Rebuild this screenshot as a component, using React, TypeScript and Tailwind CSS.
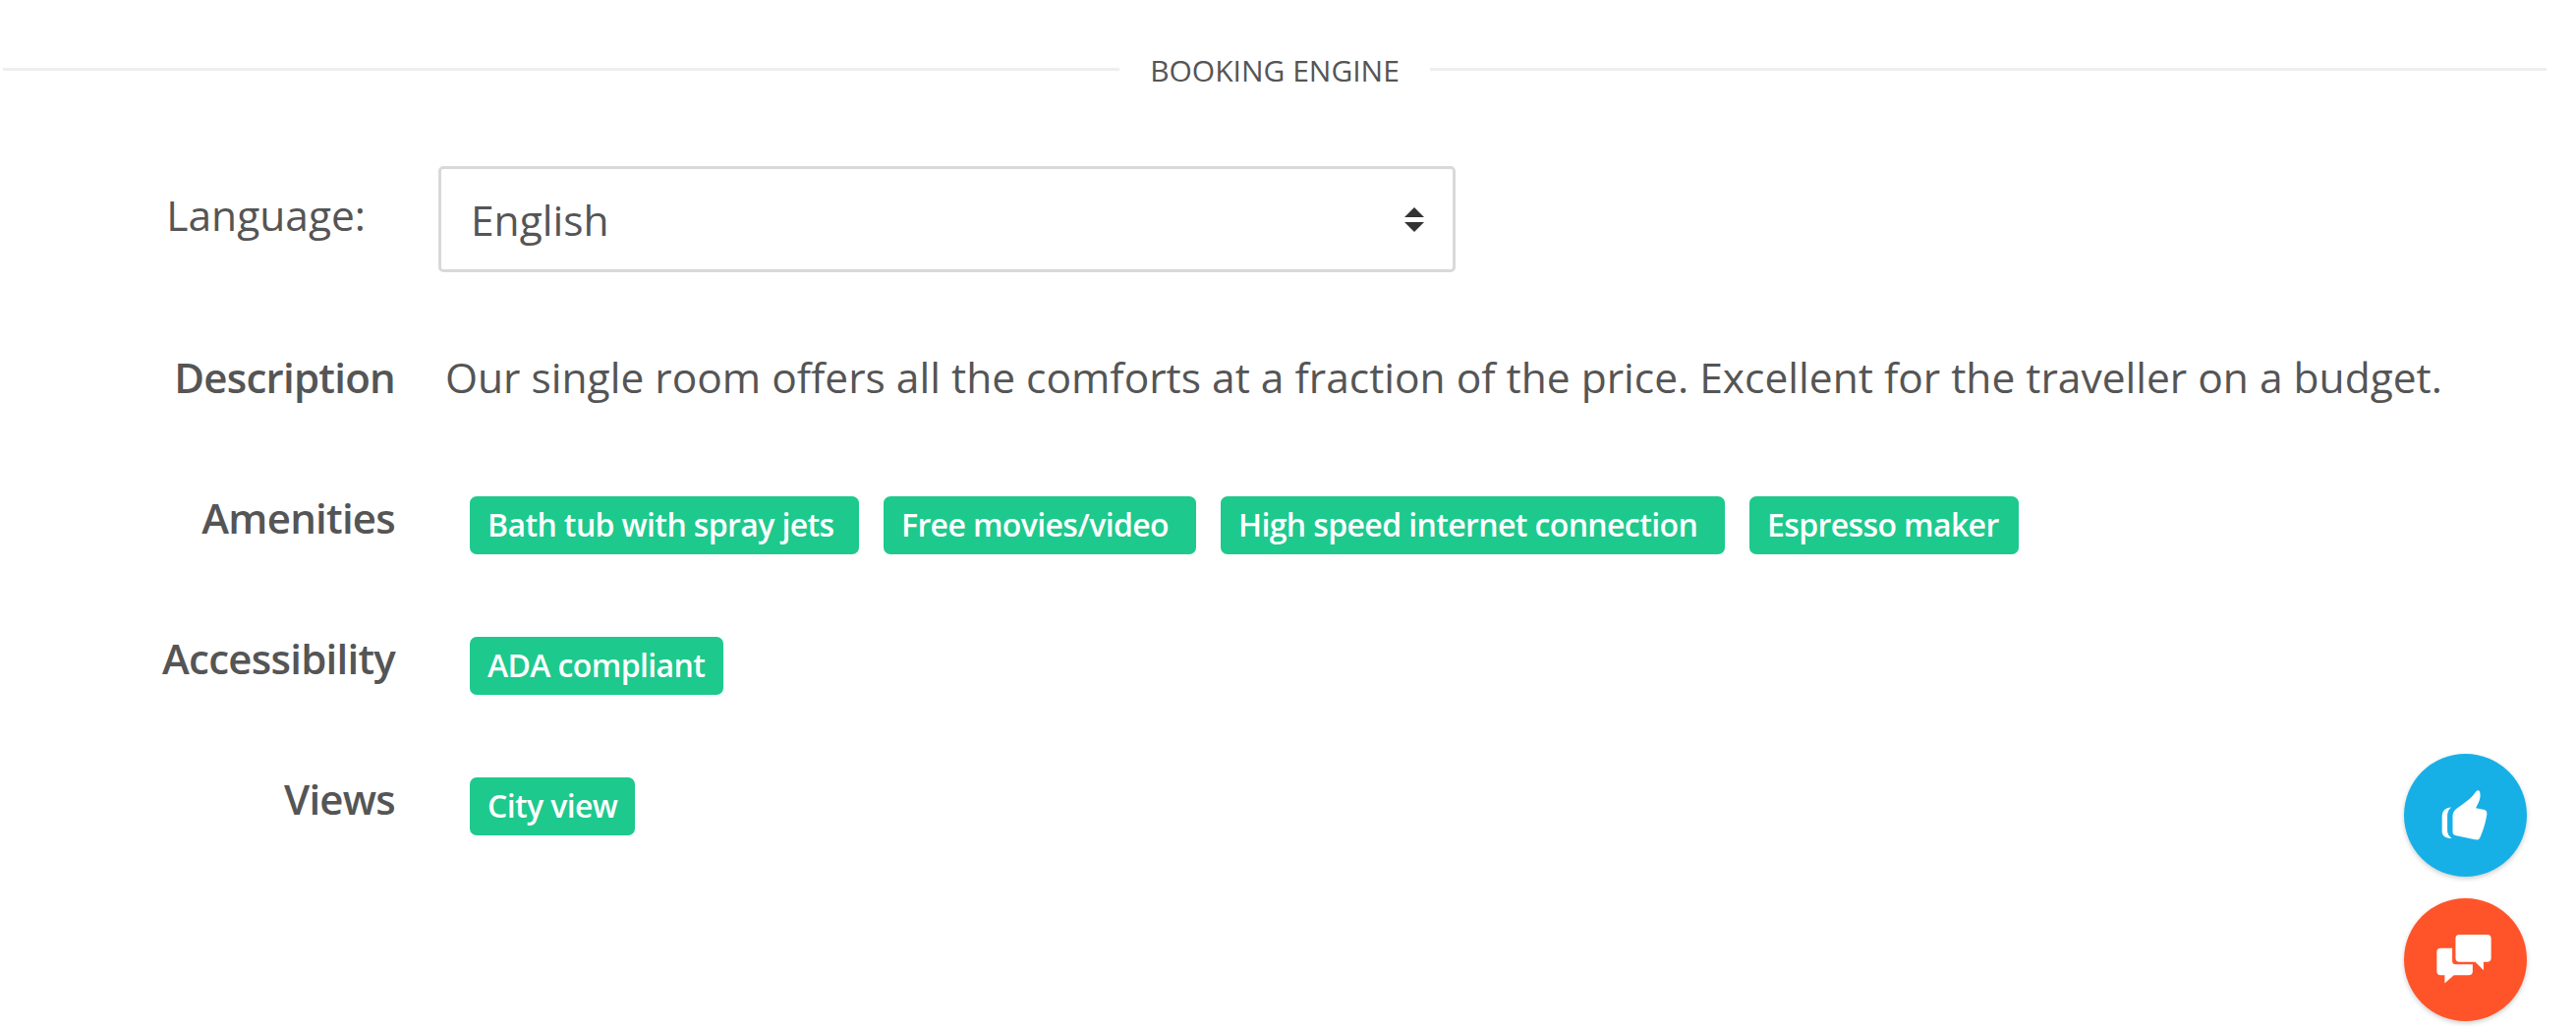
const font = { fontFamily: '"Open Sans", "Noto Sans", sans-serif' };

type Tag = { text: string; width: string };

function Row({ label, tags }: { label: string; tags: Tag[] }) {
  return (
    <div className="flex items-start h-[59px] mb-[84px]">
      <div className="w-[402px] shrink-0 -mt-[3px] text-right text-[42px] leading-[50px] font-semibold tracking-[-0.75px] text-[#555555]">{label}</div>
      <div className="ml-[76px] flex gap-[25px]">
        {tags.map((t) => (
          <span key={t.text} className={`${t.width} h-[59px] pl-[18px] rounded-[7px] bg-[#1dc98d] text-white text-[32px] font-semibold tracking-[-0.62px] leading-[57px] whitespace-nowrap`}>{t.text}</span>
        ))}
      </div>
    </div>
  );
}

export default function App() {
  return (
    <div className="relative h-[1046px] w-full overflow-hidden bg-white" style={font}>
      <div className="flex items-center pl-[3px] pr-[30px] pt-[57px] h-[84px]">
        <div className="flex-1 h-[3px] bg-[#eeeeee]" />
        <div className="px-[31px] pt-[2px] text-[30px] leading-[30px] text-[#555555] uppercase whitespace-nowrap">Booking Engine</div>
        <div className="flex-1 h-[3px] bg-[#eeeeee]" />
      </div>

      <div className="flex items-center pt-[85px]">
        <div className="w-[372px] shrink-0 -mt-[9px] text-right text-[42.5px] leading-[50px] text-[#555555]">Language:</div>
        <div className="ml-[74px] w-[1035px] h-[108px] border-[3px] border-[#d9d9d9] rounded-[5px] flex items-center justify-between pl-[30px] pr-[29px]">
          <span className="pt-[2px] text-[42.5px] leading-[50px] text-[#555555]">English</span>
          <svg width="20" height="26" viewBox="0 0 20 26" fill="#333333">
            <path d="M10 1 L20 11 H0 Z" />
            <path d="M0 16 H20 L10 26 Z" />
          </svg>
        </div>
      </div>

      <div className="flex items-start pt-[82px] h-[228px]">
        <div className="w-[402px] shrink-0 text-right text-[42px] leading-[50px] font-semibold tracking-[-0.75px] text-[#555555]">Description</div>
        <div className="ml-[51px] text-[42.5px] leading-[50px] text-[#555555] whitespace-nowrap">Our single room offers all the comforts at a fraction of the price. Excellent for the traveller on a budget.</div>
      </div>

      <div>
        <Row
          label="Amenities"
          tags={[
            { text: "Bath tub with spray jets", width: "w-[396px]" },
            { text: "Free movies/video", width: "w-[318px]" },
            { text: "High speed internet connection", width: "w-[513px]" },
            { text: "Espresso maker", width: "w-[274px]" },
          ]}
        />
        <Row label="Accessibility" tags={[{ text: "ADA compliant", width: "w-[258px]" }]} />
        <Row label="Views" tags={[{ text: "City view", width: "w-[168px]" }]} />
      </div>

      <button className="absolute left-[2446px] top-[767px] w-[125px] h-[125px] rounded-full bg-[#17b0e6] shadow-[0_2px_5px_rgba(0,0,0,0.2)] flex items-center justify-center">
        <svg width="54" height="54" viewBox="245 188 160 160" fill="#ffffff">
          <path d="M360 192 C366 190 369 198 368 212 C366 226 358 238 355 245 L381 250 C388 252 389 258 388 266 C384 290 376 316 368 333 C364 341 360 341 352 340 L296 328 C288 326 285 323 285 316 L285 268 C285 258 292 250 302 243 C318 232 332 222 342 212 C350 204 354 195 360 192 Z" />
          <path d="M281 243 C262 244 253 254 253 272 L253 316 C253 328 264 336 282 336 C274 331 269 322 269 312 L269 272 C269 258 272 250 281 243 Z" />
        </svg>
      </button>
      <button className="absolute left-[2446px] top-[914px] w-[125px] h-[125px] rounded-full bg-[#ff5429] shadow-[0_2px_5px_rgba(0,0,0,0.2)] flex items-center justify-center">
        <svg width="67" height="67" viewBox="225 608 200 200" fill="#ffffff">
          <path d="M307 632 H391 Q403 632 403 644 V703 Q403 715 391 715 H380 V740 L355 715 H307 Q295 715 295 703 V644 Q295 632 307 632 Z" />
          <path d="M250 673 H285 V712 Q285 722 295 722 H347 V743 Q347 755 335 755 H290 L262 780 V755 H250 Q238 755 238 743 V685 Q238 673 250 673 Z" />
        </svg>
      </button>
    </div>
  );
}
